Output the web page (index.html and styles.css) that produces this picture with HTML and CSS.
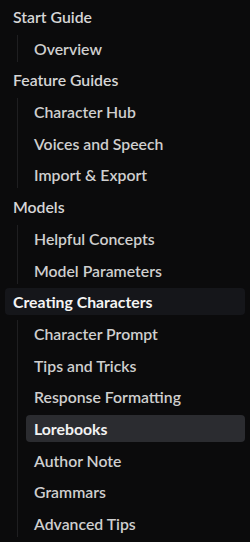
FILE: index.html
```html
<!DOCTYPE html>
<html>
<head>
<meta charset="utf-8">
<link rel="stylesheet" href="styles.css">
</head>
<body>
<nav class="nav">
  <ul class="list">
    <li><a class="item top">Start Guide</a>
      <ul class="sub">
        <li><a class="item">Overview</a></li>
      </ul>
    </li>
    <li><a class="item top">Feature Guides</a>
      <ul class="sub">
        <li><a class="item">Character Hub</a></li>
        <li><a class="item">Voices and Speech</a></li>
        <li><a class="item">Import &amp; Export</a></li>
      </ul>
    </li>
    <li><a class="item top">Models</a>
      <ul class="sub">
        <li><a class="item">Helpful Concepts</a></li>
        <li><a class="item">Model Parameters</a></li>
      </ul>
    </li>
    <li><a class="item top current">Creating Characters</a>
      <ul class="sub">
        <li><a class="item">Character Prompt</a></li>
        <li><a class="item">Tips and Tricks</a></li>
        <li><a class="item">Response Formatting</a></li>
        <li><a class="item active">Lorebooks</a></li>
        <li><a class="item">Author Note</a></li>
        <li><a class="item">Grammars</a></li>
        <li><a class="item">Advanced Tips</a></li>
      </ul>
    </li>
  </ul>
</nav>
</body>
</html>
```
FILE: styles.css
```css
html, body {
  margin: 0;
  padding: 0;
  background: #0b0b0c;
  height: 100%;
  overflow: hidden;
}
body {
  font-family: "Lato", "Noto Sans", sans-serif;
  font-size: 15.8px;
  font-weight: 600;
  color: #d2d2d2;
}
.nav {
  padding: 3px 5px 0 5px;
}
.list, .sub {
  list-style: none;
  margin: 0;
  padding: 0;
}
.list {
  display: flex;
  flex-direction: column;
  gap: 4.69px;
}
.list > li {
  display: flex;
  flex-direction: column;
  gap: 4.69px;
}
.sub {
  display: flex;
  flex-direction: column;
  gap: 4.69px;
  margin-left: 12px;
  padding-left: 8px;
  border-left: 1px solid #1f1f21;
}
.item {
  display: block;
  height: 27px;
  line-height: 27px;
  padding-left: 8px;
  border-radius: 4px;
  white-space: nowrap;
  color: #cfcfcf;
}
.top {
  color: #d6d6d6;
}
.current {
  background: #15161a;
  color: #f4f4f4;
  font-weight: 700;
}
.active {
  background: #2b2c30;
  color: #f2f2f2;
  font-weight: 700;
}
```
